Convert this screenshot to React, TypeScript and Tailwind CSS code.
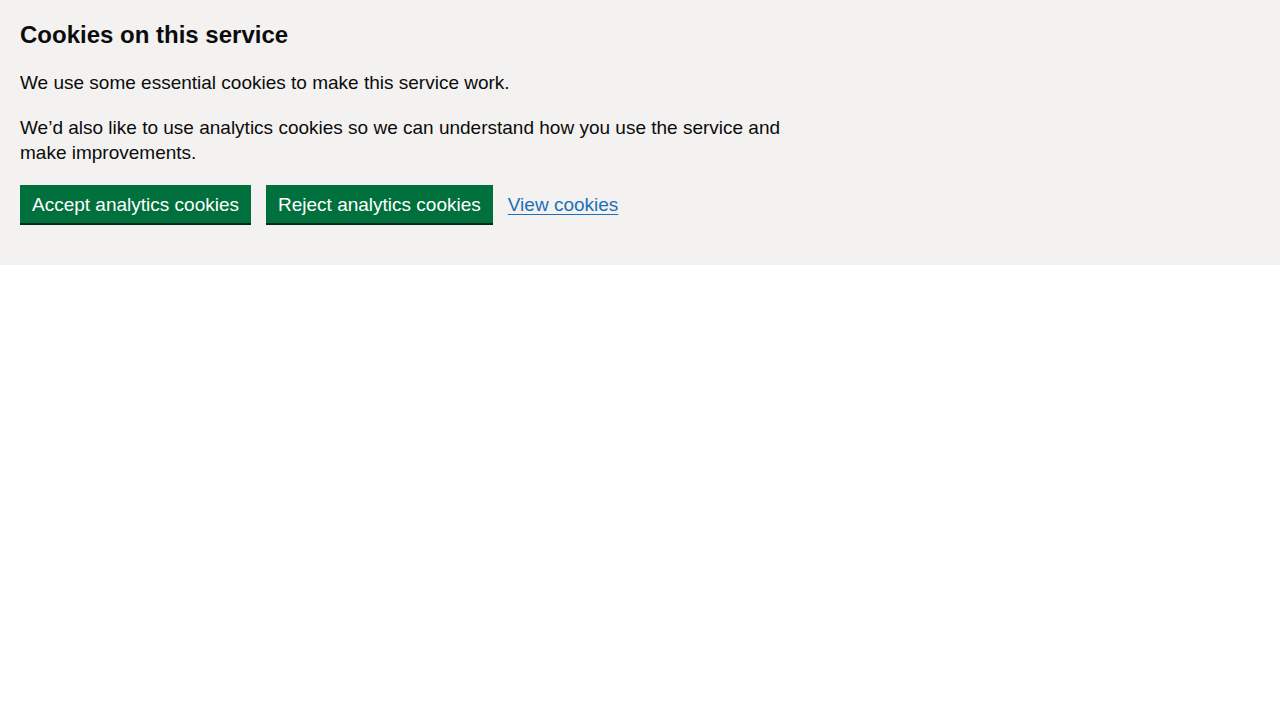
export default function App() {
  return (
    <div className="min-h-[720px] bg-white font-['Liberation_Sans',Arial,sans-serif] text-[#0b0c0c]">
      {/* Cookie banner */}
      <div className="bg-[#f3f2f1] px-[20px] pt-[20px] pb-[42px]">
        <div className="max-w-[800px]">
          <h2 className="mb-[20px] text-[24px] leading-[30px] font-bold">
            Cookies on this service
          </h2>
          <p className="mb-[20px] text-[19px] leading-[25px]">
            We use some essential cookies to make this service work.
          </p>
          <p className="mb-[20px] text-[19px] leading-[25px]">
            We’d also like to use analytics cookies so we can understand how you use the service and make
            improvements.
          </p>
        </div>

        <div className="flex items-center gap-[15px]">
          <button
            type="button"
            className="border-2 border-transparent bg-[#00703c] px-[10px] pt-[8px] pb-[7px] text-[19px] leading-[19px] text-white shadow-[0_2px_0_#002d18]"
          >
            Accept analytics cookies
          </button>
          <button
            type="button"
            className="border-2 border-transparent bg-[#00703c] px-[10px] pt-[8px] pb-[7px] text-[19px] leading-[19px] text-white shadow-[0_2px_0_#002d18]"
          >
            Reject analytics cookies
          </button>
          <a
            href="#"
            className="text-[19px] leading-[25px] text-[#1d70b8] underline decoration-1 underline-offset-[3px]"
          >
            View cookies
          </a>
        </div>
      </div>
    </div>
  );
}
